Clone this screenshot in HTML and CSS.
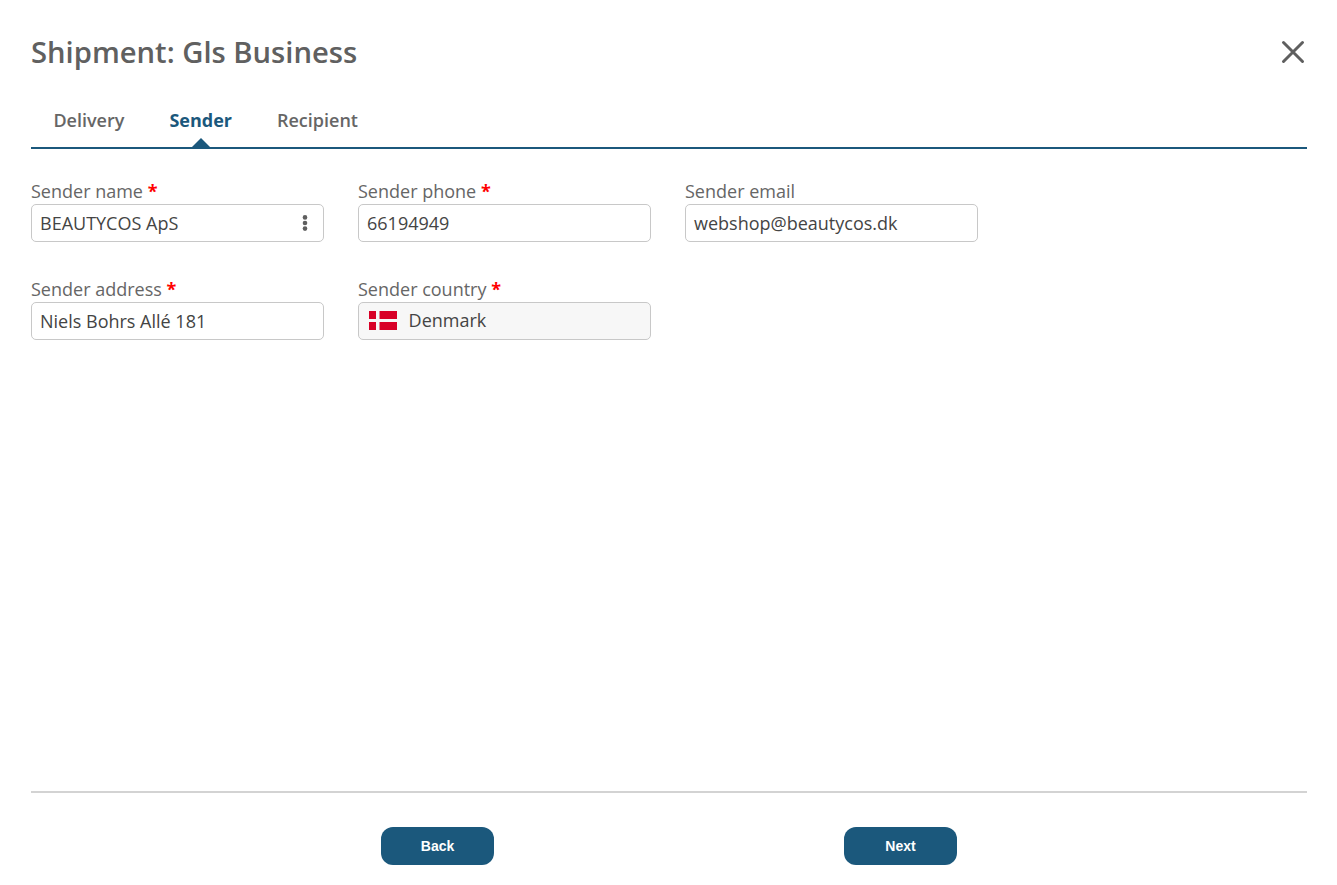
FILE: index.html
```html
<!DOCTYPE html>
<html lang="en">
<head>
<meta charset="utf-8">
<title>Shipment: Gls Business</title>
<link rel="stylesheet" href="styles.css">
</head>
<body>
<main class="dialog">
  <header class="header">
    <h1 class="title">Shipment: Gls Business</h1>
    <button class="close" type="button" aria-label="Close">
      <svg width="24" height="24" viewBox="0 0 24 24"><path d="M2.5 2.5 21.5 21.5M21.5 2.5 2.5 21.5"/></svg>
    </button>
  </header>
  <nav class="tabs">
    <a class="tab">Delivery</a>
    <a class="tab active">Sender</a>
    <a class="tab">Recipient</a>
  </nav>
  <form class="form">
    <div class="field">
      <label class="label">Sender name <b class="req">*</b></label>
      <div class="input"><span>BEAUTYCOS ApS</span>
        <svg class="dots" width="6" height="18" viewBox="0 0 6 18"><circle cx="3" cy="3.4" r="2.3"/><circle cx="3" cy="9" r="2.3"/><circle cx="3" cy="14.6" r="2.3"/></svg>
      </div>
    </div>
    <div class="field">
      <label class="label">Sender phone <b class="req">*</b></label>
      <div class="input"><span>66194949</span></div>
    </div>
    <div class="field">
      <label class="label">Sender email</label>
      <div class="input"><span>webshop@beautycos.dk</span></div>
    </div>
    <div class="field">
      <label class="label">Sender address <b class="req">*</b></label>
      <div class="input"><span>Niels Bohrs Allé 181</span></div>
    </div>
    <div class="field">
      <label class="label">Sender country <b class="req">*</b></label>
      <div class="input country">
        <svg class="flag" width="28" height="19" viewBox="0 0 28 19"><path fill="#d80027" d="M0 0h28v19H0z"/><path fill="#f7f7f7" d="M7 0h3.5v19H7zM0 8h28v3H0z"/></svg>
        <span>Denmark</span>
      </div>
    </div>
  </form>
  <footer class="footer">
    <button class="btn" type="button">Back</button>
    <button class="btn" type="button">Next</button>
  </footer>
</main>
</body>
</html>
```
FILE: styles.css
```css
* { box-sizing: border-box; }
body {
  margin: 0;
  background: #fff;
  color: #666;
  font: 18px/24px "Open Sans", sans-serif;
}
.dialog {
  display: flex;
  flex-direction: column;
  height: 885px;
  padding: 30px 30px 20px 31px;
}
.header {
  display: flex;
  justify-content: space-between;
  height: 44px;
}
.title {
  margin: 0;
  color: #606060;
  font-size: 29.2px;
  line-height: 45px;
  font-weight: 600;
}
.close {
  width: 24px;
  height: 24px;
  margin: 10px 2px 0 0;
  padding: 0;
  border: 0;
  background: none;
}
.close svg {
  display: block;
  fill: none;
  stroke: #5f5f5f;
  stroke-width: 3;
  stroke-linecap: round;
}
.tabs {
  display: flex;
  gap: 45px;
  height: 75px;
  padding: 34px 0 0 22.4px;
  border-bottom: 2px solid #1b587c;
}
.tab {
  position: relative;
  font-weight: 600;
}
.tab.active {
  color: #1b587c;
  font-weight: 700;
}
.tab.active::after {
  content: "";
  position: absolute;
  bottom: 0;
  left: 50%;
  margin-left: -9px;
  border: 9px solid transparent;
  border-top: 0;
  border-bottom-color: #1b587c;
}
.form {
  display: grid;
  grid-template-columns: repeat(3, 293px);
  column-gap: 34px;
  row-gap: 35px;
  margin-top: 30px;
}
.field {
  display: flex;
  flex-direction: column;
}
.label {
  height: 25px;
}
.req {
  color: #f00;
}
.input {
  display: flex;
  align-items: center;
  justify-content: space-between;
  height: 38px;
  padding: 0 15px 0 8px;
  border: 1px solid #c8c8c8;
  border-radius: 5px;
  color: #444;
}
.dots {
  fill: #5f5f5f;
}
.country {
  justify-content: flex-start;
  gap: 11.6px;
  padding: 0 0 2px 10px;
  background: #f7f7f7;
}
.footer {
  display: flex;
  justify-content: space-between;
  margin-top: auto;
  padding: 34px 350px 0;
  border-top: 2px solid #d3d3d3;
}
.btn {
  width: 113px;
  height: 38px;
  padding: 0;
  border: 0;
  border-radius: 12px;
  background: #1b587c;
  color: #fff;
  font: bold 14px "Liberation Sans", Arial, sans-serif;
}
```
